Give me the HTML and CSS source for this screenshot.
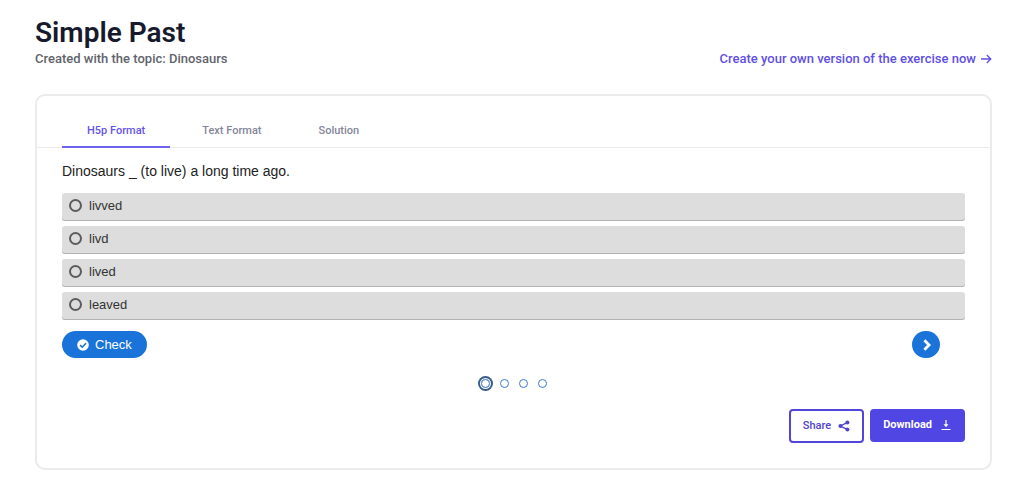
FILE: index.html
```html
<!DOCTYPE html>
<html lang="en">
<head>
    <meta charset="UTF-8">
    <meta name="viewport" content="width=device-width, initial-scale=1.0">
    <title>Simple Past</title>
    <link rel="stylesheet" href="styles.css">
</head>
<body>

    <header class="page-header">
        <div>
            <h1>Simple Past</h1>
            <p class="topic">Created with the topic: Dinosaurs</p>
        </div>
        <a href="#" class="create-link">Create your own version of the exercise now
            <svg width="12" height="12" viewBox="0 0 12 12" fill="none" stroke="currentColor" stroke-width="1.3"><path d="M1 6h9.5M6.8 2l4 4-4 4"/></svg>
        </a>
    </header>

    <main class="card">
        <div class="tabs" role="tablist">
            <button type="button" role="tab" class="tab active" aria-selected="true">H5p Format</button>
            <button type="button" role="tab" class="tab">Text Format</button>
            <button type="button" role="tab" class="tab">Solution</button>
        </div>

        <form class="exercise">
            <fieldset class="question">
                <legend>Dinosaurs _ (to live) a long time ago.</legend>
                <label class="option"><input type="radio" name="answer">livved</label>
                <label class="option"><input type="radio" name="answer">livd</label>
                <label class="option"><input type="radio" name="answer">lived</label>
                <label class="option"><input type="radio" name="answer">leaved</label>
            </fieldset>

            <div class="controls">
                <button type="button" class="check">
                    <svg width="12" height="12" viewBox="0 0 12 12"><circle cx="6" cy="6" r="5.8" fill="#fff"/><path d="M3.1 6.1l2.1 2.1 3.8-3.9" fill="none" stroke="#1a73d9" stroke-width="1.6"/></svg>
                    Check
                </button>
                <button type="button" class="next" aria-label="Next question">
                    <svg width="14" height="14" viewBox="0 0 12 12" fill="none" stroke="#fff" stroke-width="2.4"><path d="M4.6 2L8.6 6l-4 4"/></svg>
                </button>
            </div>

            <!-- Question progress -->
            <div class="dots">
                <span class="dot current"></span>
                <span class="dot"></span>
                <span class="dot"></span>
                <span class="dot"></span>
            </div>

            <div class="actions">
                <button type="button" class="share">
                    Share
                    <svg width="12" height="12" viewBox="0 0 12 12" fill="currentColor"><path d="M9.5 2.3L2.5 6l7 3.7" fill="none" stroke="currentColor" stroke-width="1.4"/><circle cx="2.5" cy="6" r="2.1"/><circle cx="9.4" cy="2.5" r="2"/><circle cx="9.4" cy="9.5" r="2"/></svg>
                </button>
                <button type="button" class="download">
                    Download
                    <svg width="12" height="12" viewBox="0 0 12 12" fill="none" stroke="currentColor" stroke-width="1.2"><path d="M6 1v6M1.5 10.5h9"/><path d="M3.5 5.2h5L6 8.2z" fill="currentColor" stroke="none"/></svg>
                </button>
            </div>
        </form>
    </main>

</body>
</html>
```
FILE: styles.css
```css
body {
    margin: 0;
    padding: 16px 32px 8px 35px;
    font-family: Roboto, sans-serif;
    background: #fff;
}

.page-header {
    display: flex;
    justify-content: space-between;
    align-items: flex-end;
    margin-bottom: 26px;
}

h1 {
    margin: 0;
    font-size: 28px;
    line-height: 34px;
    font-weight: 600;
    color: #171a2c;
}

.topic {
    margin: 0;
    font-size: 13px;
    line-height: 18px;
    font-weight: 500;
    color: #62646b;
}

.create-link {
    display: flex;
    align-items: center;
    gap: 4px;
    font-size: 13px;
    line-height: 18px;
    font-weight: 500;
    color: #5f50e4;
    text-decoration: none;
}

.card {
    border: 2px solid #ebebed;
    border-radius: 10px;
}

button {
    font-family: inherit;
    cursor: pointer;
}

.tabs {
    display: flex;
    gap: 7px;
    padding: 16px 25px 0;
    border-bottom: 1px solid #ebebed;
}

.tab {
    padding: 12px 25px 8px;
    margin-bottom: -1px;
    border: none;
    border-bottom: 2px solid transparent;
    background: none;
    font-size: 11px;
    line-height: 14px;
    font-weight: 500;
    color: #85869a;
}

.tab.active {
    color: #6455e9;
    border-bottom-color: #6f62ec;
}

/* Exercise */
.exercise {
    padding: 13px 25px 25px;
    font-family: "Liberation Sans", Arial, sans-serif;
}

.question {
    display: flex;
    flex-direction: column;
    gap: 5px;
    margin: 0;
    padding: 0;
    border: none;
}

.question legend {
    margin-bottom: 12px;
    padding: 0;
    font-size: 14px;
    line-height: 20px;
    color: #222;
}

.option {
    display: flex;
    align-items: center;
    gap: 7px;
    padding: 3px 7px 6px;
    border-radius: 3px;
    background: #ddd;
    box-shadow: inset 0 -1px 0 #b3b3b3;
    font-size: 13px;
    line-height: 19px;
    color: #333;
}

.option input {
    appearance: none;
    width: 13px;
    height: 13px;
    margin: 0;
    border: 2px solid #5c5c5c;
    border-radius: 50%;
}

.option input:checked {
    background: #5c5c5c;
    box-shadow: inset 0 0 0 2px #ddd;
}

.controls {
    display: flex;
    justify-content: space-between;
    margin-top: 11px;
    padding-right: 25px;
}

.check,
.next {
    display: flex;
    align-items: center;
    justify-content: center;
    gap: 6px;
    height: 27px;
    padding: 0 15px;
    border: none;
    border-radius: 14px;
    background: #1a73d9;
    color: #fff;
    font-size: 13px;
}

.next {
    width: 28px;
    padding: 0;
}

.dots {
    display: flex;
    align-items: center;
    justify-content: center;
    gap: 10px;
    height: 15px;
    margin-top: 18px;
}

.dot {
    box-sizing: border-box;
    width: 9px;
    height: 9px;
    border: 1px solid #3a7bc8;
    border-radius: 50%;
}

.dot.current {
    box-shadow: 0 0 0 1px #fff, 0 0 0 3px #385d8c;
}

/* Share and download */
.actions {
    display: flex;
    align-items: flex-start;
    justify-content: flex-end;
    gap: 6px;
    margin-top: 18px;
    font-family: Roboto, sans-serif;
}

.share,
.download {
    display: flex;
    align-items: center;
    gap: 7px;
    padding: 8px 12px;
    border: 2px solid #5145dc;
    border-radius: 4px;
    background: #fff;
    color: #5145cf;
    font-size: 11px;
    line-height: 14px;
    font-weight: 500;
}

.download {
    gap: 8px;
    border: none;
    padding: 9px 13px 10px;
    background: #5046e4;
    color: #fff;
    font-weight: 700;
}
```
